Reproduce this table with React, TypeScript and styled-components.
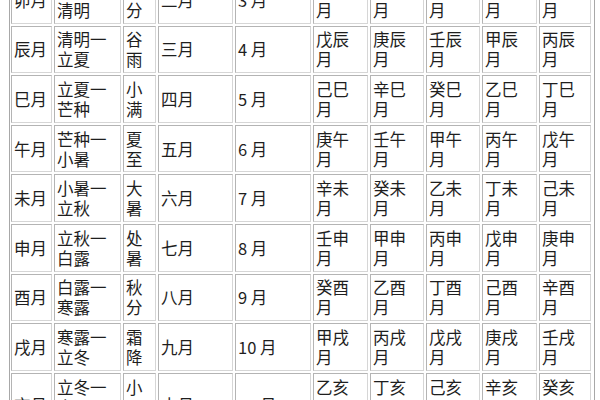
import React from "react";
import styled, { createGlobalStyle } from "styled-components";

const GlobalStyle = createGlobalStyle`
  html, body {
    margin: 0;
    padding: 0;
    background: #ffffff;
  }
  #root {
    width: 600px;
    height: 400px;
    overflow: hidden;
  }
`;

interface MonthRow {
  branch: string;
  terms: string[];
  mid: string[];
  lunar: string;
  solar: string;
  stems: string[];
}

const rows: MonthRow[] = [
  { branch: "卯月", terms: ["惊蛰一", "清明"], mid: ["春", "分"], lunar: "二月", solar: "3 月", stems: ["丁卯", "己卯", "辛卯", "癸卯", "乙卯"] },
  { branch: "辰月", terms: ["清明一", "立夏"], mid: ["谷", "雨"], lunar: "三月", solar: "4 月", stems: ["戊辰", "庚辰", "壬辰", "甲辰", "丙辰"] },
  { branch: "巳月", terms: ["立夏一", "芒种"], mid: ["小", "满"], lunar: "四月", solar: "5 月", stems: ["己巳", "辛巳", "癸巳", "乙巳", "丁巳"] },
  { branch: "午月", terms: ["芒种一", "小暑"], mid: ["夏", "至"], lunar: "五月", solar: "6 月", stems: ["庚午", "壬午", "甲午", "丙午", "戊午"] },
  { branch: "未月", terms: ["小暑一", "立秋"], mid: ["大", "暑"], lunar: "六月", solar: "7 月", stems: ["辛未", "癸未", "乙未", "丁未", "己未"] },
  { branch: "申月", terms: ["立秋一", "白露"], mid: ["处", "暑"], lunar: "七月", solar: "8 月", stems: ["壬申", "甲申", "丙申", "戊申", "庚申"] },
  { branch: "酉月", terms: ["白露一", "寒露"], mid: ["秋", "分"], lunar: "八月", solar: "9 月", stems: ["癸酉", "乙酉", "丁酉", "己酉", "辛酉"] },
  { branch: "戌月", terms: ["寒露一", "立冬"], mid: ["霜", "降"], lunar: "九月", solar: "10 月", stems: ["甲戌", "丙戌", "戊戌", "庚戌", "壬戌"] },
  { branch: "亥月", terms: ["立冬一", "大雪"], mid: ["小", "雪"], lunar: "十月", solar: "11 月", stems: ["乙亥", "丁亥", "己亥", "辛亥", "癸亥"] },
];

const Frame = styled.div`
  margin: -26px 0 0 9px;
  width: 582px;
  padding: 1px;
  border: 1px solid #a8a8a8;
  background: #ffffff;
`;

const Grid = styled.div`
  display: grid;
  grid-template-columns: 41px 67px 33px 75px 76px 55px 54px 54px 55px 52px;
  grid-template-rows: repeat(8, 47.6px) 64px;
  gap: 2px;
`;

const Cell = styled.div<{ $top?: boolean }>`
  box-sizing: border-box;
  display: flex;
  align-items: ${(p) => (p.$top ? "flex-start" : "center")};
  padding: ${(p) => (p.$top ? "3px 2px 0" : "0 2px")};
  border: 1px solid #b4b4b4;
  border-right-color: #d6d6d6;
  border-bottom-color: #d6d6d6;
  font-family: "Noto Sans CJK SC", "Noto Sans", sans-serif;
  font-size: 16.5px;
  line-height: 20px;
  color: #1e1e1e;
  white-space: pre;
  overflow: hidden;
`;

export default function App() {
  return (
    <>
      <GlobalStyle />
      <Frame>
        <Grid>
          {rows.map((r, i) => {
            const last = i === rows.length - 1;
            return (
              <React.Fragment key={r.branch}>
                <Cell>{r.branch}</Cell>
                <Cell $top={last}>{r.terms.join("\n")}</Cell>
                <Cell $top={last}>{r.mid.join("\n")}</Cell>
                <Cell>{r.lunar}</Cell>
                <Cell>{r.solar}</Cell>
                {r.stems.map((s) => (
                  <Cell key={s} $top={last}>
                    {`${s}\n月`}
                  </Cell>
                ))}
              </React.Fragment>
            );
          })}
        </Grid>
      </Frame>
    </>
  );
}
